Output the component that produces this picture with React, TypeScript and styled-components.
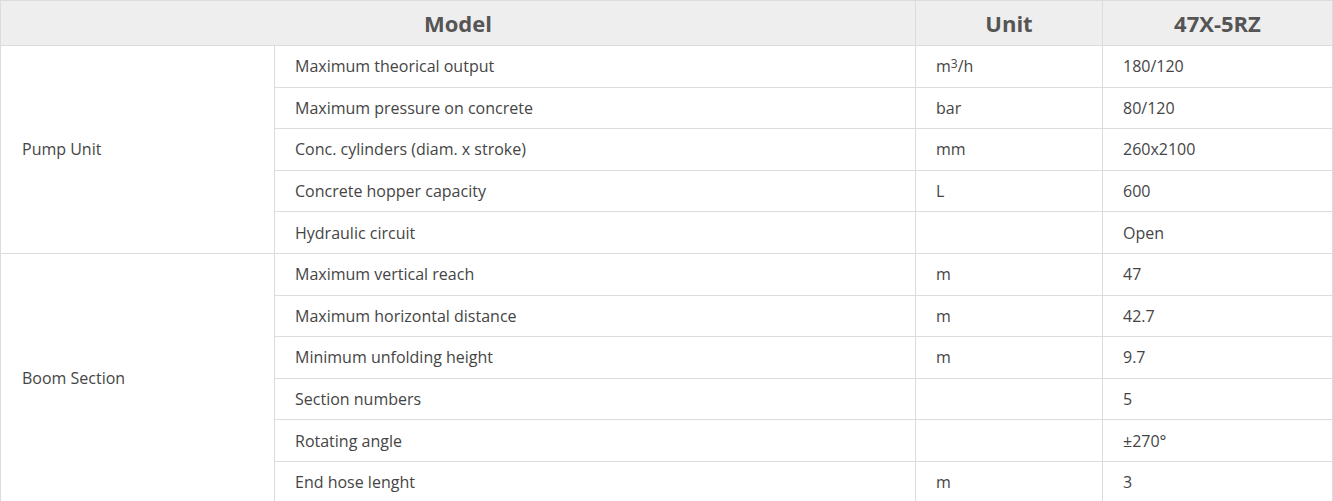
import React from "react";
import styled, { createGlobalStyle } from "styled-components";

const Global = createGlobalStyle`
  html, body { margin: 0; padding: 0; background: #fff; }
  body { font-family: "Open Sans", "Liberation Sans", sans-serif; }
`;

const Table = styled.table`
  width: 100%;
  border-collapse: collapse;
  table-layout: fixed;
  color: #454545;
  font-size: 16px;
  border: 1px solid #dcdcdc;
`;

const HeadCell = styled.th`
  background: #eeeeee;
  height: 44px;
  padding: 0;
  font-size: 22px;
  font-weight: 700;
  color: #555;
  text-align: center;
  border: 1px solid #dcdcdc;
`;

const Row = styled.tr`
  height: 41.6px;
`;

const Cell = styled.td`
  padding: 0 20px;
  border: 1px solid #dcdcdc;
  vertical-align: middle;
  white-space: nowrap;
`;

const Group = styled(Cell)`
  padding-left: 21px;
`;

const Sup = styled.sup`
  font-size: 0.75em;
  vertical-align: 0.35em;
  line-height: 0;
`;

type Spec = { name: string; unit: React.ReactNode; value: string };

const pump: Spec[] = [
  { name: "Maximum theorical output", unit: <>m<Sup>3</Sup>/h</>, value: "180/120" },
  { name: "Maximum pressure on concrete", unit: "bar", value: "80/120" },
  { name: "Conc. cylinders (diam. x stroke)", unit: "mm", value: "260x2100" },
  { name: "Concrete hopper capacity", unit: "L", value: "600" },
  { name: "Hydraulic circuit", unit: "", value: "Open" },
];

const boom: Spec[] = [
  { name: "Maximum vertical reach", unit: "m", value: "47" },
  { name: "Maximum horizontal distance", unit: "m", value: "42.7" },
  { name: "Minimum unfolding height", unit: "m", value: "9.7" },
  { name: "Section numbers", unit: "", value: "5" },
  { name: "Rotating angle", unit: "", value: "±270°" },
  { name: "End hose lenght", unit: "m", value: "3" },
];

const Section = ({ title, rows }: { title: string; rows: Spec[] }) => (
  <>
    {rows.map((r, i) => (
      <Row key={r.name}>
        {i === 0 && <Group rowSpan={rows.length}>{title}</Group>}
        <Cell>{r.name}</Cell>
        <Cell>{r.unit}</Cell>
        <Cell>{r.value}</Cell>
      </Row>
    ))}
  </>
);

export default function App() {
  return (
    <>
      <Global />
      <Table>
        <colgroup>
          <col style={{ width: 274 }} />
          <col style={{ width: 641 }} />
          <col style={{ width: 187 }} />
          <col />
        </colgroup>
        <thead>
          <tr>
            <HeadCell colSpan={2}>Model</HeadCell>
            <HeadCell>Unit</HeadCell>
            <HeadCell>47X-5RZ</HeadCell>
          </tr>
        </thead>
        <tbody>
          <Section title="Pump Unit" rows={pump} />
          <Section title="Boom Section" rows={boom} />
        </tbody>
      </Table>
    </>
  );
}
